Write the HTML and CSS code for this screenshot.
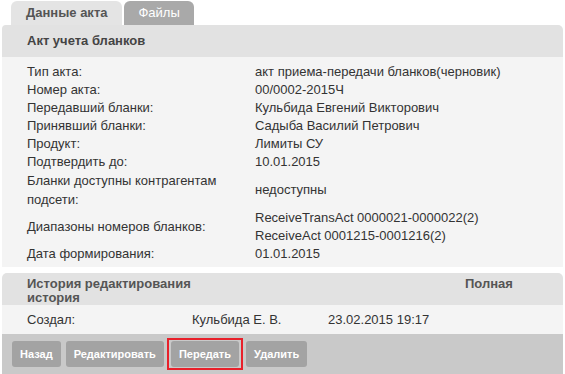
FILE: index.html
```html
<!DOCTYPE html>
<html lang="ru">
<head>
<meta charset="utf-8">
<title>Акт учета бланков</title>
<link rel="stylesheet" href="styles.css">
</head>
<body>
<div class="page">
  <div class="tabs">
    <div class="tab tab-active">Данные акта</div>
    <div class="tab tab-inactive">Файлы</div>
  </div>
  <div class="panel">
    <div class="panel-head">Акт учета бланков</div>
    <div class="panel-body">
      <div class="row"><div class="label">Тип акта:</div><div class="value">акт приема-передачи бланков(черновик)</div></div>
      <div class="row"><div class="label">Номер акта:</div><div class="value">00/0002-2015Ч</div></div>
      <div class="row"><div class="label">Передавший бланки:</div><div class="value">Кульбида Евгений Викторович</div></div>
      <div class="row"><div class="label">Принявший бланки:</div><div class="value">Садыба Василий Петрович</div></div>
      <div class="row"><div class="label">Продукт:</div><div class="value">Лимиты СУ</div></div>
      <div class="row"><div class="label">Подтвердить до:</div><div class="value">10.01.2015</div></div>
      <div class="row"><div class="label label-tall">Бланки доступны контрагентам<br>подсети:</div><div class="value">недоступны</div></div>
      <div class="row"><div class="label">Диапазоны номеров бланков:</div><div class="value">ReceiveTransAct 0000021-0000022(2)<br>ReceiveAct 0001215-0001216(2)</div></div>
      <div class="row"><div class="label">Дата формирования:</div><div class="value">01.01.2015</div></div>
    </div>
  </div>
  <div class="history">
    <div class="history-head">
      <div class="history-title">История редактирования история</div>
      <div class="history-link">Полная</div>
    </div>
    <div class="history-row">
      <div class="h-action">Создал:</div>
      <div class="h-user">Кульбида Е. В.</div>
      <div class="h-date">23.02.2015 19:17</div>
    </div>
    <div class="actions">
      <button class="btn">Назад</button>
      <button class="btn">Редактировать</button>
      <span class="marker"><button class="btn">Передать</button></span>
      <button class="btn">Удалить</button>
    </div>
  </div>
</div>
</body>
</html>
```
FILE: styles.css
```css
html, body {
  margin: 0;
  padding: 0;
  background: #ffffff;
}
body {
  font-family: "Liberation Sans", Arial, sans-serif;
  font-size: 13px;
  color: #333333;
}
.page {
  padding: 1px 2px 0 2px;
}
.tabs {
  display: flex;
  gap: 2px;
  padding-left: 9px;
  height: 24px;
}
.tab {
  height: 24px;
  line-height: 24px;
  padding: 0 14px;
  border-radius: 6px 6px 0 0;
}
.tab-active {
  background: #e4e4e4;
  color: #555555;
  font-weight: bold;
  padding: 0 15px;
}
.tab-inactive {
  background: #a9a9a9;
  color: #ffffff;
}
.panel {
  border-radius: 4px 5px 0 0;
  overflow: hidden;
}
.panel-head {
  background: #e2e2e2;
  color: #444444;
  font-weight: bold;
  height: 32px;
  line-height: 32px;
  padding-left: 25px;
}
.panel-body {
  background: #f4f4f4;
  padding: 6px 0 4px 25px;
}
.row {
  display: grid;
  grid-template-columns: 228px 1fr;
  align-items: center;
  line-height: 18px;
}
.label-tall {
  line-height: 19px;
}
.history {
  margin-top: 6px;
  border-radius: 5px 5px 0 0;
  overflow: hidden;
}
.history-head {
  background: #e2e2e2;
  color: #555555;
  font-weight: bold;
  height: 32px;
  box-sizing: border-box;
  padding: 4px 0 0 25px;
  line-height: 14px;
  display: grid;
  grid-template-columns: 438px auto;
}
.history-title {
  width: 200px;
}
.history-row {
  background: #f4f4f4;
  height: 29px;
  box-sizing: border-box;
  padding: 6px 0 0 25px;
  line-height: 18px;
  display: grid;
  grid-template-columns: 165px 136px auto;
}
.actions {
  background: #c9c9c9;
  height: 40px;
  box-sizing: border-box;
  padding: 7px 0 0 10px;
  display: flex;
  align-items: flex-start;
  gap: 5px;
}
.btn {
  display: block;
  font-family: "Liberation Sans", Arial, sans-serif;
  font-size: 11px;
  font-weight: bold;
  color: #ffffff;
  background: #a3a3a3;
  border: none;
  border-radius: 3px;
  height: 26px;
  padding: 0 8px;
  margin: 0;
}
.marker {
  display: block;
  border: 2px solid #e8202a;
  padding: 1px 2px;
  margin: -3px -2px 0 -2px;
}
```
